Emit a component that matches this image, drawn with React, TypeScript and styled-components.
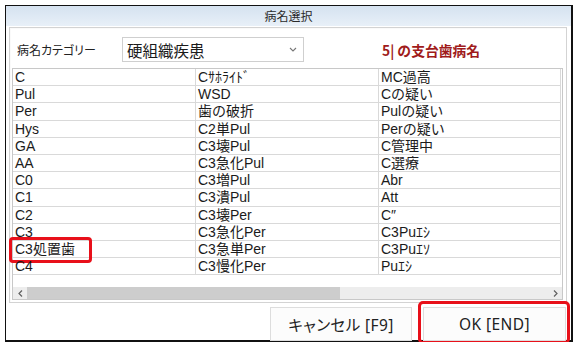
import styled, { createGlobalStyle } from 'styled-components';

const GlobalStyle = createGlobalStyle`
  body {
    margin: 0;
    background: #ffffff;
    font-family: "Noto Sans", "Noto Sans CJK JP", sans-serif;
    color: #1b1b1b;
  }
`;

const Window = styled.div`
  box-sizing: border-box;
  margin: 5px 0 0 5px;
  width: 568px;
  height: 337px;
  border: 1px solid #111;
  border-right-width: 2px;
  border-bottom-width: 2px;
  display: flex;
  flex-direction: column;
  background: #fff;
`;

const TitleBar = styled.div`
  height: 20px;
  line-height: 20px;
  text-align: center;
  font-size: 12px;
  color: #2a2a2a;
  background: linear-gradient(#d5e2f0, #e8f0f8);
  font-family: "Noto Sans CJK JP", sans-serif;
`;

const Body = styled.div`
  flex: 1;
  display: flex;
  flex-direction: column;
  padding: 1px 4px 0 3px;
`;

const GroupBox = styled.div`
  box-sizing: border-box;
  height: 276px;
  border: 1px solid #d3d3d3;
  box-shadow: inset 1px 1px 0 #fafafa;
  padding: 9px 3px 2px 2px;
  display: flex;
  flex-direction: column;
`;

const FilterRow = styled.div`
  display: flex;
  align-items: center;
  height: 25px;
  padding-left: 5px;
  margin-bottom: 6px;
`;

const Label = styled.div`
  width: 105px;
  font-size: 12px;
  font-family: "Noto Sans CJK JP", sans-serif;
  font-feature-settings: "palt";
  color: #222;
`;

const Select = styled.div`
  box-sizing: border-box;
  width: 182px;
  height: 25px;
  border: 1px solid #cfcfcf;
  background: #fff;
  display: flex;
  align-items: center;
  justify-content: space-between;
  padding: 0 6px 0 4px;
  font-size: 15.5px;
  font-family: "Noto Sans CJK JP", sans-serif;
`;

const ToothNote = styled.div`
  margin-left: 78px;
  font-size: 13.8px;
  font-weight: 700;
  color: #a01b1b;
  font-family: "Noto Sans CJK JP", sans-serif;
`;

const ListView = styled.div`
  box-sizing: border-box;
  height: 232px;
  border: 1px solid #c8c8c8;
  display: flex;
  flex-direction: column;
`;

const Grid = styled.div`
  display: grid;
  grid-template-columns: 183px 183px 182px;
  grid-auto-rows: 17.2px;
`;

const Cell = styled.div`
  position: relative;
  box-sizing: border-box;
  border-right: 1px solid #d9d9d9;
  border-bottom: 1px solid #d9d9d9;
  padding-left: 2px;
  font-family: "Liberation Sans", "Noto Sans CJK JP", sans-serif;
  font-size: 14px;
  line-height: 16px;
  white-space: nowrap;
`;

const Mark = styled.span<{ $w: number; $h: number }>`
  position: absolute;
  left: -4px;
  top: -4px;
  width: ${(p) => p.$w}px;
  height: ${(p) => p.$h}px;
  box-sizing: border-box;
  border: 3px solid #e8101a;
  border-radius: 4px;
  pointer-events: none;
`;

const Gap = styled.div`
  flex: 1;
`;

const HScroll = styled.div`
  height: 12px;
  display: flex;
  align-items: center;
  background: #ededed;
`;

const Arrow = styled.div`
  width: 14px;
  height: 12px;
  display: flex;
  align-items: center;
  justify-content: center;
`;

const Thumb = styled.div`
  width: 313px;
  height: 12px;
  background: #cdcdcd;
`;

const Track = styled.div`
  flex: 1;
`;

const ButtonRow = styled.div`
  display: flex;
  justify-content: flex-end;
  gap: 11px;
  margin-top: 4px;
  padding-right: 1px;
`;

const Button = styled.div<{ $w: number }>`
  position: relative;
  box-sizing: border-box;
  width: ${(p) => p.$w}px;
  height: 34px;
  border: 1px solid #dddddd;
  background: #fcfcfc;
  display: flex;
  align-items: center;
  justify-content: center;
  font-size: 15.5px;
  letter-spacing: 0.4px;
  font-feature-settings: "palt";
  color: #222;
`;

const ButtonMark = styled.span`
  position: absolute;
  left: -6px;
  right: -5px;
  top: -7px;
  bottom: -4px;
  border: 3px solid #e8101a;
  border-radius: 5px;
  pointer-events: none;
`;

const col1 = ['C', 'Pul', 'Per', 'Hys', 'GA', 'AA', 'C0', 'C1', 'C2', 'C3', 'C3処置歯', 'C4'];
const col2 = ['Cｻﾎﾗｲﾄﾞ', 'WSD', '歯の破折', 'C2単Pul', 'C3壊Pul', 'C3急化Pul', 'C3増Pul', 'C3潰Pul', 'C3壊Per', 'C3急化Per', 'C3急単Per', 'C3慢化Per'];
const col3 = ['MC過高', 'Cの疑い', 'Pulの疑い', 'Perの疑い', 'C管理中', 'C選療', 'Abr', 'Att', 'C″', 'C3Puｴｼ', 'C3Puｴｿ', 'Puｴｼ'];

const Chevron = () => (
  <svg width="8" height="5" viewBox="0 0 8 5">
    <path d="M1 1 L4 4 L7 1" fill="none" stroke="#777" strokeWidth="1.1" />
  </svg>
);

const Caret = ({ dir }: { dir: 'left' | 'right' }) => (
  <svg width="5" height="7" viewBox="0 0 5 7">
    <path
      d={dir === 'left' ? 'M4 0.5 L1 3.5 L4 6.5' : 'M1 0.5 L4 3.5 L1 6.5'}
      fill="none"
      stroke="#606060"
      strokeWidth="1.2"
    />
  </svg>
);

export default function App() {
  const rows = col1.map((c, i) => [c, col2[i], col3[i]]);
  return (
    <>
      <GlobalStyle />
      <Window>
        <TitleBar>病名選択</TitleBar>
        <Body>
          <GroupBox>
            <FilterRow>
              <Label>病名カテゴリー</Label>
              <Select>
                硬組織疾患
                <Chevron />
              </Select>
              <ToothNote>5| の支台歯病名</ToothNote>
            </FilterRow>
            <ListView>
              <Grid>
                {rows.flat().map((text, i) => (
                  <Cell key={i}>
                    {text}
                    {text === 'C3処置歯' && <Mark $w={83} $h={26} />}
                  </Cell>
                ))}
              </Grid>
              <Gap />
              <HScroll>
                <Arrow>
                  <Caret dir="left" />
                </Arrow>
                <Thumb />
                <Track />
                <Arrow>
                  <Caret dir="right" />
                </Arrow>
              </HScroll>
            </ListView>
          </GroupBox>
          <ButtonRow>
            <Button $w={142}>キャンセル [F9]</Button>
            <Button $w={143}>
              OK [END]
              <ButtonMark />
            </Button>
          </ButtonRow>
        </Body>
      </Window>
    </>
  );
}
